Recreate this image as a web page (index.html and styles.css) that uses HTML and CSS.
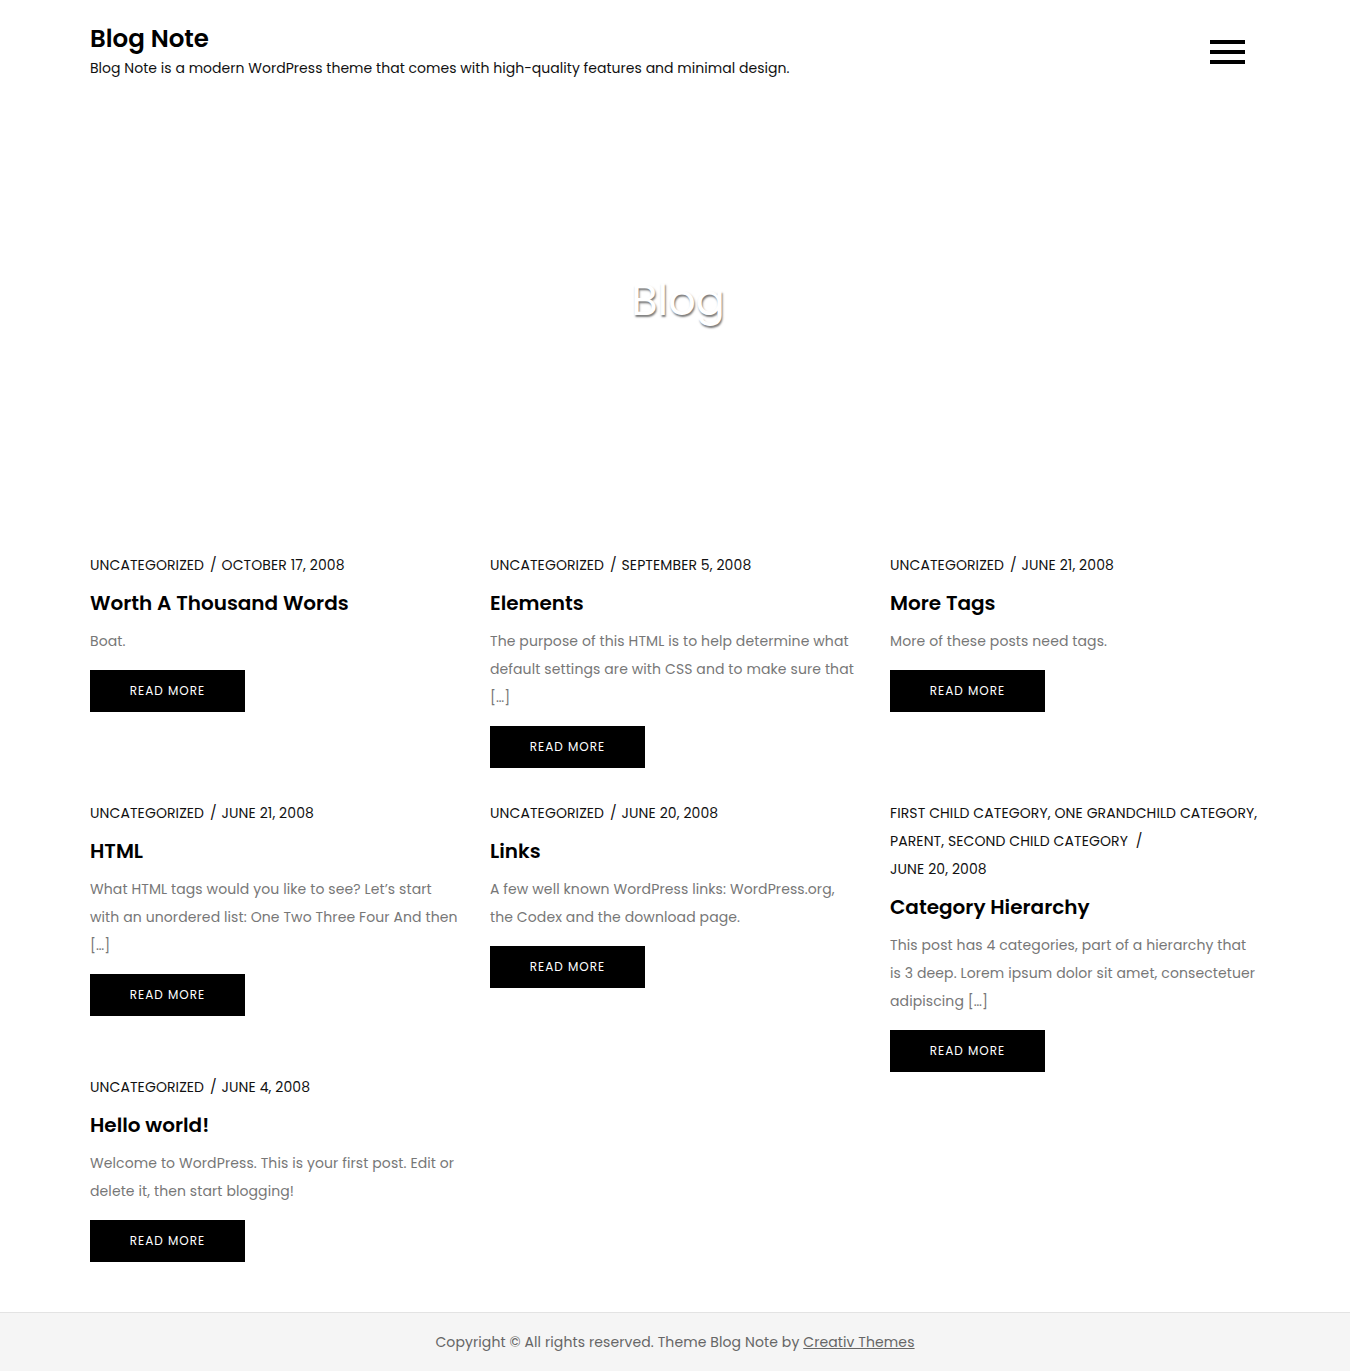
FILE: index.html
```html
<!DOCTYPE html>
<html lang="en">
<head>
<meta charset="utf-8">
<title>Blog – Blog Note</title>
<link rel="stylesheet" href="styles.css">
</head>
<body>
<header class="site-header">
  <div class="container header-inner">
    <div class="branding">
      <h1 class="site-title">Blog Note</h1>
      <p class="site-tagline">Blog Note is a modern WordPress theme that comes with high-quality features and minimal design.</p>
    </div>
    <button class="menu-toggle" aria-label="Menu">
      <span class="bar"></span><span class="bar"></span><span class="bar"></span>
    </button>
  </div>
</header>

<section class="hero">
  <h2 class="hero-title">Blog</h2>
</section>

<main class="posts">
  <div class="container post-grid">
    <article class="post">
      <div class="meta">Uncategorized <span class="sep">/</span> October 17, 2008</div>
      <h3 class="post-title">Worth A Thousand Words</h3>
      <p class="excerpt">Boat.</p>
      <a class="btn" href="#">Read More</a>
    </article>
    <article class="post">
      <div class="meta">Uncategorized <span class="sep">/</span> September 5, 2008</div>
      <h3 class="post-title">Elements</h3>
      <p class="excerpt">The purpose of this HTML is to help determine what default settings are with CSS and to make sure that […]</p>
      <a class="btn" href="#">Read More</a>
    </article>
    <article class="post">
      <div class="meta">Uncategorized <span class="sep">/</span> June 21, 2008</div>
      <h3 class="post-title">More Tags</h3>
      <p class="excerpt">More of these posts need tags.</p>
      <a class="btn" href="#">Read More</a>
    </article>
    <article class="post">
      <div class="meta">Uncategorized <span class="sep">/</span> June 21, 2008</div>
      <h3 class="post-title">HTML</h3>
      <p class="excerpt">What HTML tags would you like to see? Let’s start with an unordered list: One Two Three Four And then […]</p>
      <a class="btn" href="#">Read More</a>
    </article>
    <article class="post">
      <div class="meta">Uncategorized <span class="sep">/</span> June 20, 2008</div>
      <h3 class="post-title">Links</h3>
      <p class="excerpt">A few well known WordPress links: WordPress.org, the Codex and the download page.</p>
      <a class="btn" href="#">Read More</a>
    </article>
    <article class="post post-tall">
      <div class="meta"><p class="cats">First Child Category, One Grandchild Category, Parent, Second Child Category&nbsp; /</p><p class="date-block">June 20, 2008</p></div>
      <h3 class="post-title">Category Hierarchy</h3>
      <p class="excerpt">This post has 4 categories, part of a hierarchy that is 3 deep. Lorem ipsum dolor sit amet, consectetuer adipiscing […]</p>
      <a class="btn" href="#">Read More</a>
    </article>
    <article class="post">
      <div class="meta">Uncategorized <span class="sep">/</span> June 4, 2008</div>
      <h3 class="post-title">Hello world!</h3>
      <p class="excerpt">Welcome to WordPress. This is your first post. Edit or delete it, then start blogging!</p>
      <a class="btn" href="#">Read More</a>
    </article>
  </div>
</main>

<footer class="site-footer">
  <p class="copyright">Copyright © All rights reserved. Theme Blog Note by <a href="#">Creativ Themes</a></p>
</footer>
</body>
</html>
```

FILE: styles.css
```css
* { box-sizing: border-box; }

html, body {
  margin: 0;
  padding: 0;
  background: #fff;
}

body {
  font-family: "Poppins", "Open Sans", "DejaVu Sans", sans-serif;
  color: #111;
  font-size: 14px;
}

.container {
  width: 1170px;
  margin: 0 auto;
}

/* Header */
.site-header {
  padding: 22px 0 18px;
}

.header-inner {
  display: flex;
  justify-content: space-between;
  align-items: flex-start;
}

.site-title {
  margin: 0;
  font-size: 24.5px;
  line-height: 33px;
  font-weight: 600;
  color: #000;
}

.site-tagline {
  margin: 0;
  font-size: 14px;
  line-height: 27px;
  color: #111;
  letter-spacing: 0.03px;
}

.menu-toggle {
  display: flex;
  flex-direction: column;
  gap: 6px;
  width: 35px;
  margin: 18px 15px 0 0;
  padding: 0;
  border: 0;
  background: none;
  cursor: pointer;
}

.menu-toggle .bar {
  display: block;
  width: 35px;
  height: 4px;
  background: #000;
}

/* Hero */
.hero {
  height: 400px;
  display: flex;
  align-items: center;
  justify-content: center;
}

.hero-title {
  margin: 0 0 0 6px;
  font-size: 43px;
  line-height: 1;
  font-weight: 400;
  color: #fff;
  text-shadow: 1px 2px 2px #7a7a7a;
}

/* Posts */
.posts {
  padding: 51px 0 50px;
}

.post-grid {
  display: grid;
  grid-template-columns: repeat(3, 370px);
  column-gap: 30px;
  row-gap: 31px;
  align-items: start;
}

.post-tall {
  margin-bottom: -30px;
}

.meta {
  font-size: 14px;
  line-height: 28px;
  text-transform: uppercase;
  color: #111;
  letter-spacing: 0.1px;
}

.meta .sep {
  padding: 0 1px 0 2px;
}

.meta .cats,
.meta .date-block {
  margin: 0;
}

.post-title {
  margin: 9px 0 0;
  font-size: 20px;
  line-height: 30px;
  font-weight: 600;
  color: #000;
}

.excerpt {
  margin: 9px 0 0;
  font-size: 14px;
  line-height: 28px;
  color: #777;
  letter-spacing: 0.1px;
}

.btn {
  display: flex;
  align-items: center;
  justify-content: center;
  width: 155px;
  height: 42px;
  margin-top: 15px;
  background: #000;
  color: #fff;
  font-size: 12px;
  letter-spacing: 1px;
  text-transform: uppercase;
  text-decoration: none;
}

/* Footer */
.site-footer {
  border-top: 1px solid #e3e3e3;
  background: #f5f5f5;
  padding: 15px 0;
}

.copyright {
  margin: 0;
  text-align: center;
  font-size: 14px;
  line-height: 28px;
  color: #666;
  letter-spacing: 0.1px;
}

.copyright a {
  color: #666;
  text-decoration: underline;
}
```
